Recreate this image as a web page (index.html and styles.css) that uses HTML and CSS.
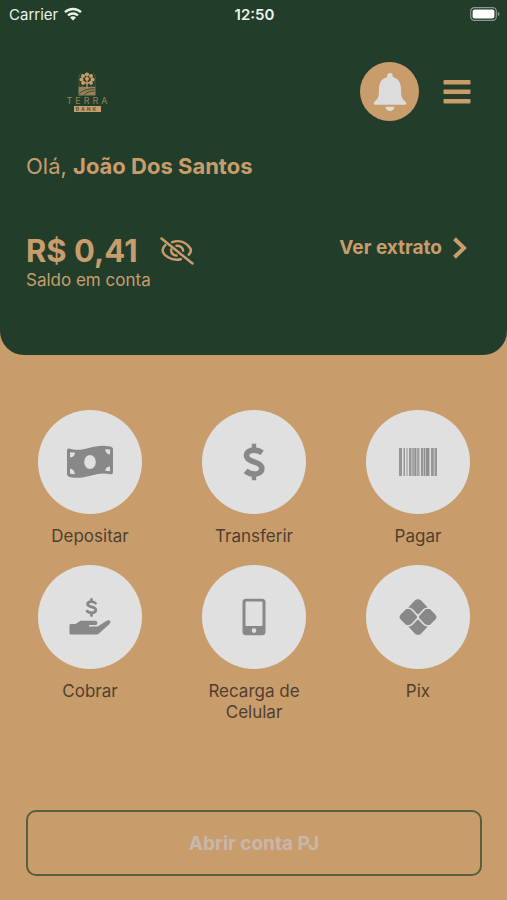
FILE: index.html
```html
<!DOCTYPE html>
<html lang="pt-BR">
<head>
<meta charset="utf-8">
<meta name="viewport" content="width=device-width, initial-scale=1">
<title>Terra Bank</title>
<link rel="stylesheet" href="styles.css">
</head>
<body>
<header class="hero">
  <div class="status">
    <div class="carrier">
      <span>Carrier</span>
      <svg width="18" height="14" viewBox="0 0 18 14" fill="none" stroke="currentColor" stroke-width="2.4" aria-hidden="true">
        <path d="M1 5.2a11.5 11.5 0 0 1 16 0M4 8.5a7.2 7.2 0 0 1 10 0"/>
        <path d="M9 13.6l-3-3.1a4.2 4.2 0 0 1 6 0z" fill="currentColor" stroke="none"/>
      </svg>
    </div>
    <time class="clock">12:50</time>
    <svg class="battery" width="30" height="14" viewBox="0 0 30 14" aria-hidden="true">
      <rect x=".7" y=".7" width="25.6" height="12.6" rx="3.6" fill="none" stroke="#879a8c" stroke-width="1.2"/>
      <rect x="2.6" y="2.6" width="21.8" height="8.8" rx="2" fill="#fff"/>
      <path d="M27.8 4.8q1.8.8 1.8 2.2t-1.8 2.2z" fill="#879a8c"/>
    </svg>
  </div>

  <div class="topbar">
    <div class="logo">
      <svg width="18" height="24" viewBox="0 0 18 24" aria-hidden="true">
        <path d="M1 15V4q0-1.5 2-2.5M17 15V4q0-1.5-2-2.5" fill="none" stroke="#55603f" stroke-width=".8"/>
        <path d="M.5 15q4-1 7.500 0h2q3.500-1 7.500 0v8.500H.5z" fill="#94815a"/>
        <path d="M1 22q4-5 15.500-5.500M6 23.300q2.500-4 11-4.500" fill="none" stroke="#3b4a31" stroke-width=".9"/>
        <path d="M9 16V8M9 12l-4-3M9 12l4-3" stroke="#c89d6b" stroke-width="1.2" fill="none"/>
        <g fill="#c89d6b">
          <circle cx="9" cy="2.500" r="2.100"/><circle cx="5" cy="4" r="2"/><circle cx="13" cy="4" r="2"/>
          <circle cx="3.500" cy="7.600" r="2"/><circle cx="14.500" cy="7.600" r="2"/><circle cx="9" cy="6.700" r="2"/>
          <circle cx="5" cy="11" r="1.900"/><circle cx="13" cy="11" r="1.900"/>
        </g>
      </svg>
      <span class="logo-name">TERRA</span>
      <span class="logo-tag">BANK</span>
    </div>
    <div class="actions">
      <button class="bell" type="button" aria-label="Notificações">
        <svg width="34" height="40" viewBox="0 0 34 40" fill="#dcdcdc" aria-hidden="true">
          <path d="M17 1c1.700 0 2.800 1.200 2.800 2.600 0 .6-.1 1 0 1.300C25.500 6.300 28 11 28 17c0 8 1 9.500 3.500 11.800 1.200 1.200 1.800 1.800 1.800 2.600 0 .8-.6 1.300-1.600 1.300H2.300c-1 0-1.600-.5-1.600-1.300 0-.8.6-1.400 1.800-2.600C5 26.500 6 25 6 17 6 11 8.500 6.300 14.200 4.900c.1-.3 0-.7 0-1.300C14.200 2.200 15.300 1 17 1z"/>
          <path d="M12.500 34.800h9c-.3 2.500-2 4.300-4.500 4.300s-4.200-1.800-4.500-4.300z"/>
        </svg>
      </button>
      <button class="menu" type="button" aria-label="Menu">
        <svg width="28" height="26" viewBox="0 0 28 26" fill="currentColor" aria-hidden="true">
          <rect x=".5" y="1" width="27" height="4.6" rx=".8"/><rect x=".5" y="10.5" width="27" height="4.6" rx=".8"/><rect x=".5" y="20" width="27" height="4.6" rx=".8"/>
        </svg>
      </button>
    </div>
  </div>

  <p class="greeting">Olá, <strong>João Dos Santos</strong></p>

  <div class="account">
    <div>
      <div class="balance">
        <strong class="amount">R$ 0,41</strong>
        <button class="eye" type="button" aria-label="Ocultar saldo">
          <svg width="34" height="28" viewBox="0 0 34 28" fill="none" stroke="currentColor" stroke-width="2.5" stroke-linecap="round" aria-hidden="true">
            <path d="M1.500 1.500l31 25"/>
            <path d="M12.200 5.100C20 2.500 26.500 5.500 30.300 11.500c1.300 2 .9 3.600-1.500 6.200"/>
            <path d="M5.300 8.200C3.600 9.800 2.600 11.200 2.600 13.200c0 4.600 8.400 11.200 18.200 9"/>
            <path d="M16.500 8.800c3.700-.3 6.400 1.700 6.600 4.800M11.200 12.500c-.4 3.500 2 5.900 5.300 6.100"/>
          </svg>
        </button>
      </div>
      <p class="caption">Saldo em conta</p>
    </div>
    <a class="statement" href="#extrato">
      <span>Ver extrato</span>
      <svg width="16" height="22" viewBox="0 0 16 22" fill="none" stroke="currentColor" stroke-width="4" aria-hidden="true"><path d="M2.500 1.800l9.500 9.200-9.500 9.200"/></svg>
    </a>
  </div>
</header>

<main class="content">
  <nav class="services" aria-label="Serviços">
    <a class="service" href="#depositar">
      <span class="disc">
        <svg width="48" height="34" viewBox="0 0 48 34" aria-hidden="true">
          <path fill="currentColor" d="M3 3.500C18 8.500 28-2.500 44.500 1.600 46 2 47 3 47 4.500V27c0 1.800-1 2.600-2.500 2.200C29 25.500 19 36 3.500 31.900 2 31.500 1 30.500 1 29V5.500C1 3.900 1.800 3.200 3 3.500z"/>
          <g fill="#e0e0e0"><ellipse cx="24" cy="17" rx="5.800" ry="6.900"/><path d="M4 7.200l5 .5c0 2.700-2 4.700-5 4.700zM44 4.500v5c-2.700 0-4.500-2-4.800-5.200zM4 28.800v-5c2.700 0 4.700 2 4.900 5.400zM44 26.300l-4.800-.5c0-2.700 2-4.400 4.800-4.400z"/></g>
        </svg>
      </span>
      <span>Depositar</span>
    </a>
    <a class="service" href="#transferir">
      <span class="disc">
        <svg width="22" height="38" viewBox="0 0 22 38" fill="none" stroke="currentColor" stroke-width="5.6" stroke-linejoin="round" aria-hidden="true">
          <path d="M19.200 9.800C16.500 7.900 14 7.100 11 7.100c-4.700 0-7.500 2.400-7.500 5.600 0 3 2.500 4.500 7.500 6.100 5 1.500 7.800 3.200 7.800 6.600 0 3.400-3 5.700-7.600 5.700-3.400 0-6.200-1-8.600-3.200"/><path d="M11 .8v6M11 31v6.200" stroke-width="4.4"/>
        </svg>
      </span>
      <span>Transferir</span>
    </a>
    <a class="service" href="#pagar">
      <span class="disc">
        <svg width="38" height="28" viewBox="0 0 38 28" fill="currentColor" aria-hidden="true">
          <path opacity=".85" d="M0 0h3v28H0zM5 0h1v28H5zM7.500 0h1v28h-1zM10 0h2v28h-2zM13.500 0h1v28h-1zM15.500 0h1.500v28h-1.500zM18.500 0h1v28h-1zM22 0h2v28h-2zM25 0h1v28h-1zM27 0h3v28h-3zM32 0h2.500v28H32zM36.200 0H38v28h-1.800z"/>
          <path opacity=".4" d="M4 0h1v28H4zM12 0h6v28h-6zM18 0h3v28h-3zM24 0h7v28h-7zM34 0h3v28h-3z"/>
        </svg>
      </span>
      <span>Pagar</span>
    </a>
    <a class="service" href="#cobrar">
      <span class="disc">
        <svg width="42" height="38" viewBox="0 0 42 38" aria-hidden="true">
          <path fill="currentColor" d="M2 26h4.500l3-2c1.200-.8 2.300-1.200 4-1.200h12.800c2.800 0 2.800 4.200 0 4.200H20v1.500h7.500c1.200 0 2-.3 3-1.200l7.300-4.600c3-1.700 5 .9 2.700 3.200L30 35.500c-.9.800-1.600 1-2.800 1H2c-1 0-1.500-.5-1.500-1.500v-7.500c0-1 .5-1.500 1.500-1.500z"/>
          <g fill="none" stroke="currentColor" stroke-width="2.8" stroke-linecap="round" stroke-linejoin="round"><path d="M26.500 5.200c-1.300-1.100-2.700-1.500-4-1.500-2.300 0-3.900 1-3.900 2.600 0 3.300 8.200 1.900 8.200 5.500 0 1.900-1.700 3-4.300 3-1.700 0-3-.5-4.400-1.600M22.500 1.500v2M22.500 15v2.500"/></g>
        </svg>
      </span>
      <span>Cobrar</span>
    </a>
    <a class="service" href="#recarga">
      <span class="disc">
        <svg width="24" height="38" viewBox="0 0 24 38" aria-hidden="true">
          <path fill="currentColor" fill-rule="evenodd" d="M4 .7h16A3.500 3.500 0 0 1 23.500 4.200v29.500A3.500 3.500 0 0 1 20 37.200H4A3.500 3.500 0 0 1 .5 33.700V4.200A3.500 3.500 0 0 1 4 .7zM4.500 3.500a1 1 0 0 0-1 1V27a1 1 0 0 0 1 1h15a1 1 0 0 0 1-1V4.500a1 1 0 0 0-1-1zM12 30.300a2.300 2.300 0 1 0 0 4.600 2.300 2.300 0 0 0 0-4.600z"/>
        </svg>
      </span>
      <span>Recarga de<br>Celular</span>
    </a>
    <a class="service" href="#pix">
      <span class="disc">
        <svg width="38" height="38" viewBox="0 0 38 38" fill="currentColor" aria-hidden="true">
          <path d="M9.300 9.600l6.200-6.800c1.900-2.100 5.100-2.100 7 0l6.200 6.800c-2 0-3.500.8-4.700 2l-4 4.200c-.6.600-1.400.6-2 0l-4-4.200C12.800 10.400 11.300 9.600 9.300 9.600z"/>
          <path d="M9.300 28.400l6.200 6.800c1.900 2.100 5.100 2.100 7 0l6.200-6.800c-2 0-3.500-.8-4.700-2l-4-4.200c-.6-.6-1.400-.6-2 0l-4 4.200C12.800 27.600 11.300 28.400 9.300 28.400z"/>
          <path d="M7.200 11.100h2.500c1.100 0 2.200.5 3 1.300l4.700 5c.9.900.9 2.300 0 3.200l-4.700 5c-.8.800-1.900 1.300-3 1.300H7.200l-5.300-5.100a4 4 0 0 1 0-5.600zM30.800 11.100h-2.500c-1.100 0-2.200.5-3 1.300l-4.700 5c-.9.900-.9 2.300 0 3.200l4.700 5c.8.800 1.900 1.300 3 1.300h2.500l5.300-5.100a4 4 0 0 0 0-5.600z"/>
        </svg>
      </span>
      <span>Pix</span>
    </a>
  </nav>
  <button class="open-account" type="button">Abrir conta PJ</button>
</main>
</body>
</html>
```
FILE: styles.css
```css
* { box-sizing: border-box; }

body {
  margin: 0;
  min-height: 100vh;
  display: flex;
  flex-direction: column;
  background: #c89d6b;
  color: #503f30;
  font-family: Inter, "Liberation Sans", sans-serif;
}

p { margin: 0; }
svg { display: block; flex: none; }

button {
  padding: 0;
  border: 0;
  background: none;
  color: inherit;
  font: inherit;
}

a { color: inherit; text-decoration: none; }

.hero {
  padding-bottom: 65px;
  border-radius: 0 0 24px 24px;
  background: #233d2b;
  color: #c89d6b;
}

.status {
  display: grid;
  grid-template-columns: 1fr auto 1fr;
  align-items: center;
  height: 28px;
  padding: 0 7px 0 9px;
  color: #e9f2ea;
  font-size: 15px;
}

.carrier { display: flex; align-items: center; gap: 6px; }
.clock { font-weight: 600; }
.battery { justify-self: end; }

.topbar {
  display: flex;
  justify-content: space-between;
  align-items: center;
  margin-top: 34px;
  padding: 0 36px 0 64px;
}

.logo {
  display: flex;
  flex-direction: column;
  align-items: center;
  width: 46px;
}

.logo-name {
  margin-right: -3px;
  color: #94815a;
  font-size: 9px;
  line-height: 10px;
  letter-spacing: 3px;
}

.logo-tag {
  width: 27px;
  background: #c89d6b;
  color: #4f5638;
  font-size: 5px;
  font-weight: 700;
  line-height: 6px;
  text-align: center;
  letter-spacing: 2px;
}

.actions { display: flex; align-items: center; gap: 24px; }

.bell {
  display: grid;
  place-items: center;
  width: 59px;
  height: 59px;
  border-radius: 50%;
  background: #c89d6b;
}

.greeting {
  margin-top: 30px;
  padding: 0 26px;
  font-size: 22px;
  line-height: 30px;
}

.account {
  display: flex;
  justify-content: space-between;
  align-items: flex-start;
  margin-top: 51px;
  padding: 0 39px 0 26px;
}

.balance { display: flex; align-items: center; gap: 22px; }
.amount { font-size: 31px; line-height: 38px; }
.caption { font-size: 17px; line-height: 20px; }

.statement {
  display: flex;
  align-items: center;
  gap: 10px;
  margin-top: 4px;
  font-size: 19px;
  font-weight: 700;
  line-height: 24px;
}

.content {
  flex: 1;
  display: flex;
  flex-direction: column;
  justify-content: space-between;
  padding: 55px 0 24px;
}

.services {
  display: grid;
  grid-template-columns: repeat(3, 1fr);
  row-gap: 18px;
  padding: 0 7px 0 8px;
}

.service {
  display: flex;
  flex-direction: column;
  align-items: center;
  gap: 12px;
  font-size: 17px;
  line-height: 21px;
  text-align: center;
}

.disc {
  display: grid;
  place-items: center;
  width: 104px;
  height: 104px;
  border-radius: 50%;
  background: #e0e0e0;
  color: #888;
}

.open-account {
  height: 66px;
  margin: 0 25px 0 26px;
  border: 2px solid #56613b;
  border-radius: 10px;
  color: #c9b7ab;
  font-size: 19px;
  font-weight: 700;
}
```
